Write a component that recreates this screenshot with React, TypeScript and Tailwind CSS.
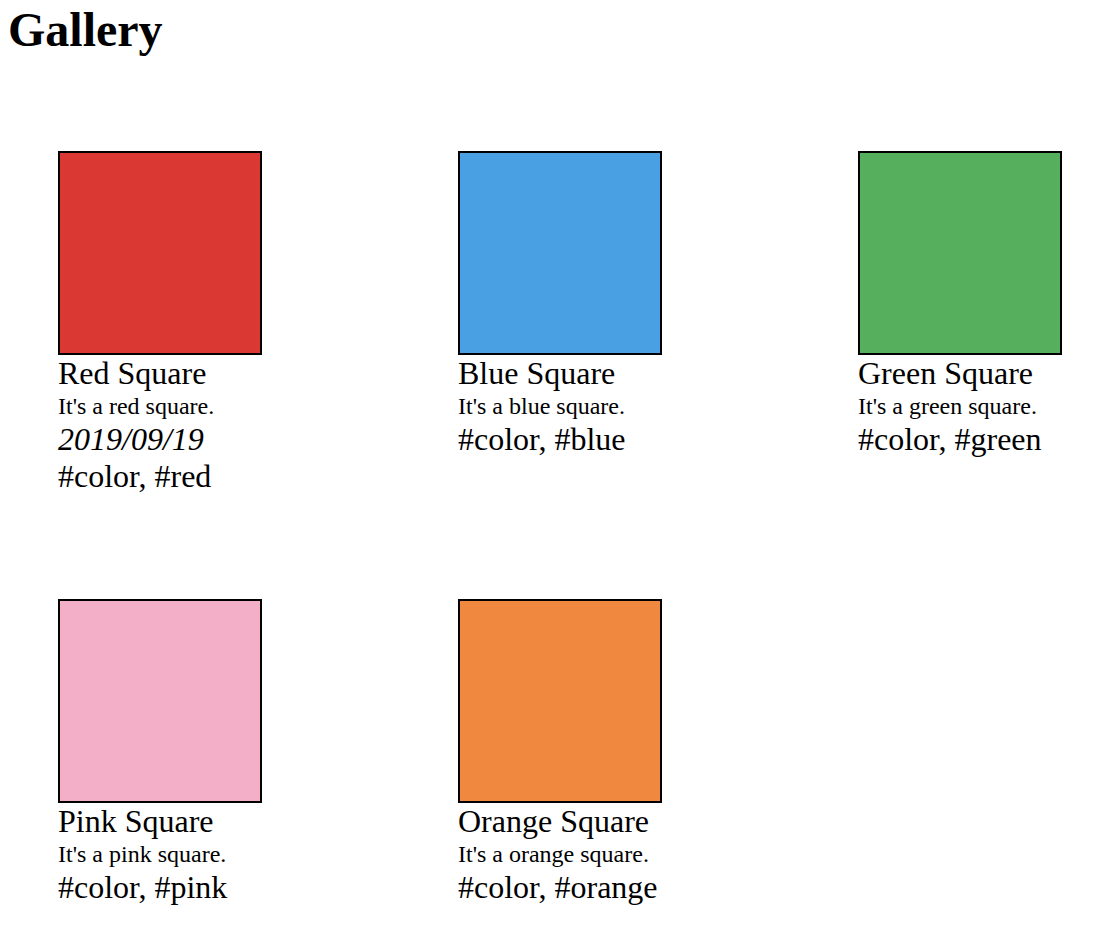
import React from "react";

interface Item {
  title: string;
  desc: string;
  date?: string;
  tags: string[];
  color: string;
}

const items: Item[] = [
  { title: "Red Square", desc: "It's a red square.", date: "2019/09/19", tags: ["color", "red"], color: "bg-[#da3833]" },
  { title: "Blue Square", desc: "It's a blue square.", tags: ["color", "blue"], color: "bg-[#49a0e2]" },
  { title: "Green Square", desc: "It's a green square.", tags: ["color", "green"], color: "bg-[#56af5c]" },
  { title: "Pink Square", desc: "It's a pink square.", tags: ["color", "pink"], color: "bg-[#f4afc8]" },
  { title: "Orange Square", desc: "It's a orange square.", tags: ["color", "orange"], color: "bg-[#f08840]" },
];

function Card({ item }: { item: Item }) {
  return (
    <div className="flex flex-col whitespace-nowrap">
      <div className={`w-[204px] h-[204px] border-2 border-black ${item.color}`} />
      <div className="text-[32px] leading-[36px]">{item.title}</div>
      <div className="text-[24px] leading-[30px]">{item.desc}</div>
      {item.date && <div className="text-[32px] leading-[37px] italic">{item.date}</div>}
      <div className="text-[32px] leading-[37px]">{item.tags.map((t) => `#${t}`).join(", ")}</div>
    </div>
  );
}

export default function App() {
  return (
    <div className="min-h-screen bg-white text-black px-[8px] pt-[2px] font-['Liberation_Serif',_'Times_New_Roman',_serif]">
      <h1 className="text-[48px] leading-[55px] font-bold">Gallery</h1>
      <div className="mt-[94px] pl-[50px] grid grid-cols-[300px_300px_204px] gap-x-[100px] gap-y-[104px]">
        {items.map((item) => (
          <Card key={item.title} item={item} />
        ))}
      </div>
    </div>
  );
}
